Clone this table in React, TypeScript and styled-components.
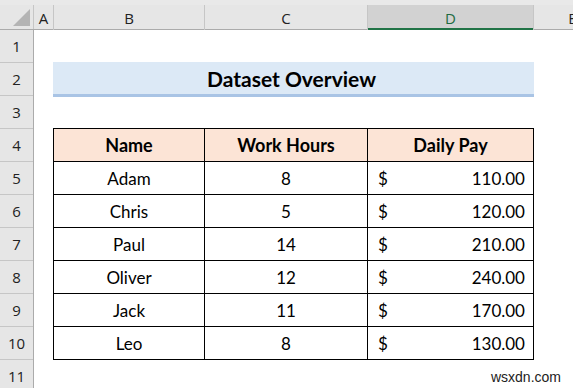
import { Fragment } from "react";
import styled, { createGlobalStyle } from "styled-components";

const GlobalStyle = createGlobalStyle`
  html, body {
    margin: 0;
    padding: 0;
    background: #ffffff;
    overflow: hidden;
  }
  * { box-sizing: border-box; }
`;

const rows = [
  { name: "Adam", hours: 8, pay: "110.00" },
  { name: "Chris", hours: 5, pay: "120.00" },
  { name: "Paul", hours: 14, pay: "210.00" },
  { name: "Oliver", hours: 12, pay: "240.00" },
  { name: "Jack", hours: 11, pay: "170.00" },
  { name: "Leo", hours: 8, pay: "130.00" },
];

const columns = [
  { label: "A", width: 20 },
  { label: "B", width: 151 },
  { label: "C", width: 163 },
  { label: "D", width: 166, selected: true },
  { label: "E", width: 78 },
];

const Window = styled.div`
  width: 573px;
  height: 388px;
  position: relative;
  overflow: hidden;
  font-family: "Open Sans", "Noto Sans", sans-serif;
  background: #fff;
`;

const TopStrip = styled.div`
  height: 5px;
  background: #e9e9e9;
`;

const HeaderBar = styled.div`
  display: flex;
  width: max-content;
  min-width: 100%;
  height: 25px;
  background: #e6e6e6;
  border-bottom: 1px solid #ababab;
`;

const Corner = styled.div`
  width: 34px;
  flex: none;
  position: relative;
  border-right: 1px solid #c6c6c6;
`;

const CornerTriangle = styled.div`
  position: absolute;
  right: 3px;
  bottom: 3px;
  width: 0;
  height: 0;
  border-left: 17px solid transparent;
  border-bottom: 17px solid #b4b4b4;
`;

const ColHead = styled.div<{ $w: number; $selected?: boolean }>`
  width: ${(p) => p.$w}px;
  flex: none;
  display: flex;
  align-items: center;
  justify-content: center;
  font-size: 15px;
  color: ${(p) => (p.$selected ? "#1d6b40" : "#222")};
  background: ${(p) => (p.$selected ? "#d2d2d2" : "transparent")};
  border-right: 1px solid #c6c6c6;
  box-shadow: ${(p) => (p.$selected ? "inset 0 -2px 0 #217346" : "none")};
  margin-bottom: -1px;
`;

const Body = styled.div`
  display: flex;
`;

const RowHeads = styled.div`
  width: 34px;
  flex: none;
  display: flex;
  flex-direction: column;
  background: #e6e6e6;
  border-right: 1px solid #ababab;
`;

const RowHead = styled.div`
  height: 33px;
  flex: none;
  display: flex;
  align-items: center;
  justify-content: center;
  font-size: 15px;
  color: #222;
  border-bottom: 1px solid #c6c6c6;
`;

const Canvas = styled.div`
  padding-left: 19px;
  display: flex;
  flex-direction: column;
  font-family: "Lato", "Open Sans", sans-serif;
  color: #000;
`;

const Spacer = styled.div<{ $h: number }>`
  height: ${(p) => p.$h}px;
`;

const Title = styled.div`
  width: 481px;
  height: 35px;
  background: #dce9f6;
  border-bottom: 3px solid #a9c4e5;
  display: flex;
  align-items: center;
  justify-content: center;
  font-size: 21px;
  font-weight: 700;
  padding: 1px 4px 0 0;
`;

const Table = styled.div`
  width: 481px;
  display: grid;
  grid-template-columns: 151px 163px 166px;
  border-top: 1px solid #000;
  border-left: 1px solid #000;
`;

const Cell = styled.div<{ $head?: boolean }>`
  height: 33px;
  display: flex;
  align-items: center;
  justify-content: center;
  border-right: 1px solid #000;
  border-bottom: 1px solid #000;
  background: ${(p) => (p.$head ? "#fce4d6" : "#fff")};
  font-size: ${(p) => (p.$head ? "18px" : "17px")};
  font-weight: ${(p) => (p.$head ? 700 : 400)};
`;

const MoneyCell = styled(Cell)`
  justify-content: space-between;
  padding: 0 8px 0 10px;
`;

const Watermark = styled.div`
  position: absolute;
  right: 10px;
  bottom: 2px;
  padding: 1px 2px;
  background: rgba(255, 255, 255, 0.9);
  font-family: "Liberation Sans", Arial, sans-serif;
  font-size: 14px;
  color: #222;
`;

export default function App() {
  return (
    <Window>
      <GlobalStyle />
      <TopStrip />
      <HeaderBar>
        <Corner>
          <CornerTriangle />
        </Corner>
        {columns.map((c) => (
          <ColHead key={c.label} $w={c.width} $selected={c.selected}>
            {c.label}
          </ColHead>
        ))}
      </HeaderBar>
      <Body>
        <RowHeads>
          {Array.from({ length: 11 }, (_, i) => (
            <RowHead key={i}>{i + 1}</RowHead>
          ))}
        </RowHeads>
        <Canvas>
          <Spacer $h={32} />
          <Title>Dataset Overview</Title>
          <Spacer $h={31} />
          <Table>
            <Cell $head>Name</Cell>
            <Cell $head>Work Hours</Cell>
            <Cell $head>Daily Pay</Cell>
            {rows.map((r) => (
              <Fragment key={r.name}>
                <Cell>{r.name}</Cell>
                <Cell>{r.hours}</Cell>
                <MoneyCell>
                  <span>$</span>
                  <span>{r.pay}</span>
                </MoneyCell>
              </Fragment>
            ))}
          </Table>
        </Canvas>
      </Body>
      <Watermark>wsxdn.com</Watermark>
    </Window>
  );
}
